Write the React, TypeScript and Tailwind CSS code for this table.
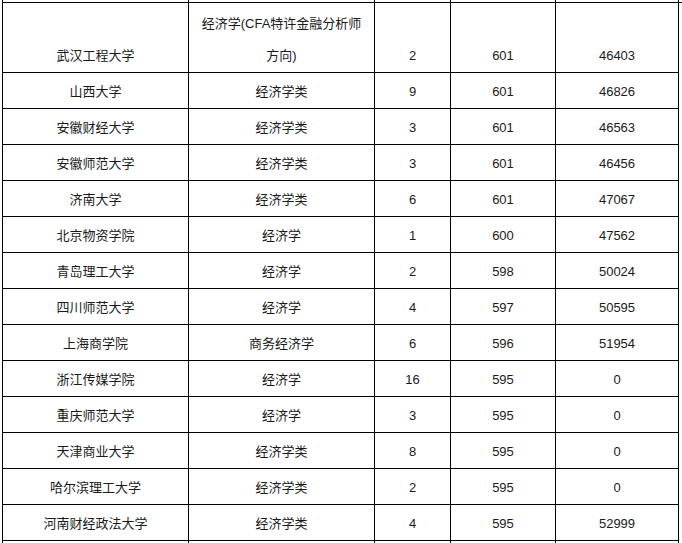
const rows: [string, string, string, string, string][] = [
  ['山西大学', '经济学类', '9', '601', '46826'],
  ['安徽财经大学', '经济学类', '3', '601', '46563'],
  ['安徽师范大学', '经济学类', '3', '601', '46456'],
  ['济南大学', '经济学类', '6', '601', '47067'],
  ['北京物资学院', '经济学', '1', '600', '47562'],
  ['青岛理工大学', '经济学', '2', '598', '50024'],
  ['四川师范大学', '经济学', '4', '597', '50595'],
  ['上海商学院', '商务经济学', '6', '596', '51954'],
  ['浙江传媒学院', '经济学', '16', '595', '0'],
  ['重庆师范大学', '经济学', '3', '595', '0'],
  ['天津商业大学', '经济学类', '8', '595', '0'],
  ['哈尔滨理工大学', '经济学类', '2', '595', '0'],
  ['河南财经政法大学', '经济学类', '4', '595', '52999'],
];

const grid = 'grid grid-cols-[186px_186px_76px_105px_123px]';

function Spacer() {
  return (
    <div className={`${grid} h-[2px]`}>
      {[0, 1, 2, 3, 4].map((i) => (
        <div key={i} className="border-r border-black" />
      ))}
    </div>
  );
}

export default function App() {
  return (
    <div
      className="min-h-[543px] bg-white text-[13px] leading-[32px] text-[#1a1a1a]"
      style={{ fontFamily: '"Liberation Sans", "Noto Sans CJK SC", Arial, sans-serif' }}
    >
      <div className="ml-[2px] w-[680px] border-l border-black">
        <Spacer />
        <div className={`${grid} h-[71px] border-t border-black`}>
          <div className="flex items-end justify-center border-r border-b border-black">武汉工程大学</div>
          <div className="flex items-end justify-center border-r border-b border-black pt-px text-center">
            <span>
              经济学(CFA特许金融分析师
              <br />
              方向)
            </span>
          </div>
          <div className="flex items-end justify-center border-r border-b border-black">2</div>
          <div className="flex items-end justify-center border-r border-b border-black">601</div>
          <div className="flex items-end justify-center border-r border-b border-black">46403</div>
        </div>
        {rows.map((r) => (
          <div key={r[0]} className={`${grid} h-[36px]`}>
            {r.map((c, i) => (
              <div key={i} className="flex items-center justify-center border-r border-b border-black pt-[2px]">
                {c}
              </div>
            ))}
          </div>
        ))}
        <Spacer />
      </div>
    </div>
  );
}
